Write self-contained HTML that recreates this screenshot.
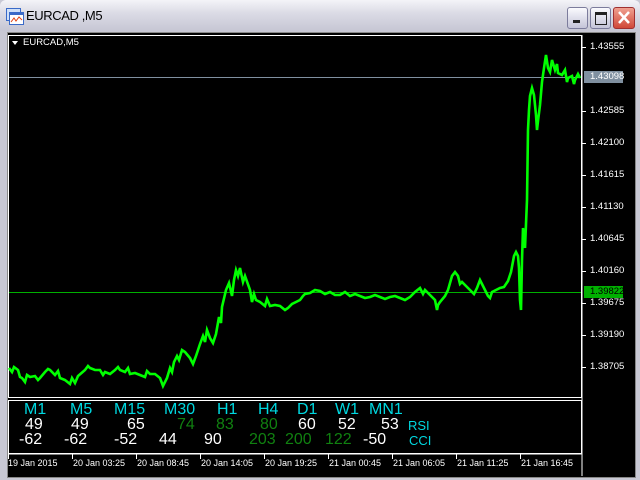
<!DOCTYPE html>
<html><head><meta charset="utf-8"><style>
*{margin:0;padding:0}
body{width:640px;height:480px;overflow:hidden;background:#c8c8d4;font-family:"Liberation Sans",sans-serif;position:relative}
.tb{position:absolute;left:0;top:0;width:640px;height:31px;background:linear-gradient(#f4f4f8,#dcdce6 40%,#c6c6d4);border-radius:6px 6px 0 0}
.title{position:absolute;left:26px;top:8px;font-size:13px;color:#000;letter-spacing:-0.4px}
.btn{position:absolute;top:7px;width:19px;height:20px;border:1px solid #7c7c9c;border-radius:3px;background:linear-gradient(#fafafe,#c4c4d8)}
.blk{position:absolute;left:7px;top:32px;width:627px;height:444px;background:#000;border:1px solid #888}
.w{color:#fff}
.t{position:absolute;font-size:9px;color:#fff;white-space:pre;top:458px}
.p{position:absolute;font-size:9.5px;color:#fff;left:590px}
.i{position:absolute;font-size:16px}
.c{color:#00d8e0}.g{color:#108010}
.r1{top:401px}.r2{top:416px}.r3{top:431px}
</style></head><body>
<div class="tb"></div>
<svg style="position:absolute;left:6px;top:8px" width="18" height="18"><rect x="0.5" y="0.5" width="14" height="12" fill="#cfe0f8" stroke="#3a6ac8"/><rect x="3.5" y="4.5" width="14" height="12" fill="#fff" stroke="#3a6ac8"/><rect x="4" y="5" width="13" height="2" fill="#3a6ac8"/><path d="M5 14 L8 10 L10 13 L13 9 L16 12" stroke="#e04010" fill="none"/></svg>
<div class="title">EURCAD ,M5</div>
<div class="btn" style="left:567px"><div style="position:absolute;left:5px;top:12px;width:7px;height:3px;background:#222"></div></div>
<div class="btn" style="left:590px"><div style="position:absolute;left:4px;top:4px;width:10px;height:9px;border:1px solid #222;border-top-width:3px"></div></div>
<div class="btn" style="left:613px;width:20px;background:linear-gradient(#f0a090,#d04838);border-color:#a03030"><svg width="20" height="20"><path d="M5 4 L15 15 M15 4 L5 15" stroke="#fff" stroke-width="2.5"/></svg></div>
<div class="blk"></div>
<svg style="position:absolute;left:0;top:0" width="640" height="480">
<rect x="8.5" y="35.5" width="573" height="362" fill="none" stroke="#fff"/>
<rect x="8.5" y="400.5" width="573" height="53" fill="none" stroke="#fff"/>
<line x1="582" y1="35" x2="582" y2="476" stroke="#fff"/>
<line x1="9" y1="77.5" x2="581" y2="77.5" stroke="#8090a0"/>
<line x1="9" y1="292.5" x2="581" y2="292.5" stroke="#00b000"/>
<rect x="584" y="71" width="39" height="12" fill="#8090a0"/>
<rect x="584" y="286" width="39" height="12" fill="#00b000"/>
<g stroke="#fff"><line x1="582" y1="47.5" x2="586" y2="47.5"/><line x1="582" y1="111.5" x2="586" y2="111.5"/><line x1="582" y1="143.5" x2="586" y2="143.5"/><line x1="582" y1="175.5" x2="586" y2="175.5"/><line x1="582" y1="207.5" x2="586" y2="207.5"/><line x1="582" y1="239.5" x2="586" y2="239.5"/><line x1="582" y1="271.5" x2="586" y2="271.5"/><line x1="582" y1="303.5" x2="586" y2="303.5"/><line x1="582" y1="335.5" x2="586" y2="335.5"/><line x1="582" y1="367.5" x2="586" y2="367.5"/>
<line x1="8" y1="454" x2="582" y2="454"/>
<line x1="8.5" y1="454" x2="8.5" y2="459"/><line x1="72.5" y1="454" x2="72.5" y2="459"/><line x1="136.5" y1="454" x2="136.5" y2="459"/><line x1="200.5" y1="454" x2="200.5" y2="459"/><line x1="264.5" y1="454" x2="264.5" y2="459"/><line x1="328.5" y1="454" x2="328.5" y2="459"/><line x1="392.5" y1="454" x2="392.5" y2="459"/><line x1="456.5" y1="454" x2="456.5" y2="459"/><line x1="520.5" y1="454" x2="520.5" y2="459"/></g>
<path d="M12 41 L18 41 L15 45 Z" fill="#fff"/>
<polyline fill="none" stroke="#00ff00" stroke-width="2.6" stroke-linejoin="miter" points="9,368 12,372 14,367 18,370 20,377 22,378 25,382 27,375 30,377 35,376 38,380 40,378 45,372 48,369 50,370 55,375 58,371 60,378 65,380 70,384 72,378 75,383 78,376 85,370 88,366 90,368 95,370 100,370 103,375 105,372 110,374 115,370 118,367 120,370 125,372 128,368 130,374 135,373 140,375 145,377 147,371 150,374 155,374 160,378 163,386 167,378 170,368 172,372 174,362 177,356 179,360 182,350 185,352 190,358 193,364 196,356 200,344 203,336 205,342 207,330 210,338 213,343 216,334 219,317 221,323 222,307 226,290 229,283 232,296 234,280 236,270 238,276 240,268 243,282 245,276 250,290 252,302 254,294 256,300 260,302 265,306 267,299 270,306 275,305 280,306 285,310 288,308 292,304 296,302 300,300 303,296 305,294 310,293 315,290 320,291 325,294 330,292 335,295 340,295 345,292 350,296 355,294 360,296 365,298 370,297 375,295 380,297 385,299 390,297 395,296 400,298 405,300 410,297 415,292 420,288 423,294 425,290 430,295 435,300 437,310 438,305 440,302 445,296 448,290 452,276 455,272 458,276 460,284 462,282 465,285 470,290 474,294 477,288 480,280 482,284 485,290 488,296 490,298 492,292 496,290 500,288 504,287 508,281 511,272 514,256 516,252 518,256 519,268 520,300 521,310 522,260 523,228 525,248 527,200 528,130 529,110 530,96 532,88 534,95 536,115 537,130 538,121 540,105 542,82 544,68 546,55 548,68 550,72 552,60 555,70 557,64 558,73 562,75 565,70 567,82 568,78 572,76 574,84 575,80 578,74 580,78"/>
</svg>
<div class="t" style="left:23px;top:37px;font-size:9.5px">EURCAD,M5</div>
<div class="p" style="top:41px">1.43555</div>
<div class="p" style="top:71px;color:#fff">1.43098</div>
<div class="p" style="top:105px">1.42585</div>
<div class="p" style="top:137px">1.42100</div>
<div class="p" style="top:169px">1.41615</div>
<div class="p" style="top:201px">1.41130</div>
<div class="p" style="top:233px">1.40645</div>
<div class="p" style="top:265px">1.40160</div>
<div class="p" style="top:286px;color:#000">1.39822</div>
<div class="p" style="top:297px">1.39675</div>
<div class="p" style="top:329px">1.39190</div>
<div class="p" style="top:361px">1.38705</div>
<div class="i c r1" style="left:24px">M1</div>
<div class="i c r1" style="left:70px">M5</div>
<div class="i c r1" style="left:114px">M15</div>
<div class="i c r1" style="left:164px">M30</div>
<div class="i c r1" style="left:217px">H1</div>
<div class="i c r1" style="left:258px">H4</div>
<div class="i c r1" style="left:297px">D1</div>
<div class="i c r1" style="left:335px">W1</div>
<div class="i c r1" style="left:369px">MN1</div>
<div class="i w r2" style="left:25px">49</div>
<div class="i w r2" style="left:71px">49</div>
<div class="i w r2" style="left:127px">65</div>
<div class="i g r2" style="left:177px">74</div>
<div class="i g r2" style="left:216px">83</div>
<div class="i g r2" style="left:260px">80</div>
<div class="i w r2" style="left:298px">60</div>
<div class="i w r2" style="left:338px">52</div>
<div class="i w r2" style="left:381px">53</div>
<div class="c" style="position:absolute;left:408px;top:418px;font-size:13px">RSI</div>
<div class="i w r3" style="left:19px">-62</div>
<div class="i w r3" style="left:64px">-62</div>
<div class="i w r3" style="left:114px">-52</div>
<div class="i w r3" style="left:159px">44</div>
<div class="i w r3" style="left:204px">90</div>
<div class="i g r3" style="left:249px">203</div>
<div class="i g r3" style="left:285px">200</div>
<div class="i g r3" style="left:325px">122</div>
<div class="i w r3" style="left:363px">-50</div>
<div class="c" style="position:absolute;left:409px;top:433px;font-size:13px">CCI</div>
<div class="t" style="left:8px">19 Jan 2015</div>
<div class="t" style="left:73px">20 Jan 03:25</div>
<div class="t" style="left:137px">20 Jan 08:45</div>
<div class="t" style="left:201px">20 Jan 14:05</div>
<div class="t" style="left:265px">20 Jan 19:25</div>
<div class="t" style="left:329px">21 Jan 00:45</div>
<div class="t" style="left:393px">21 Jan 06:05</div>
<div class="t" style="left:457px">21 Jan 11:25</div>
<div class="t" style="left:521px">21 Jan 16:45</div>
</body></html>
